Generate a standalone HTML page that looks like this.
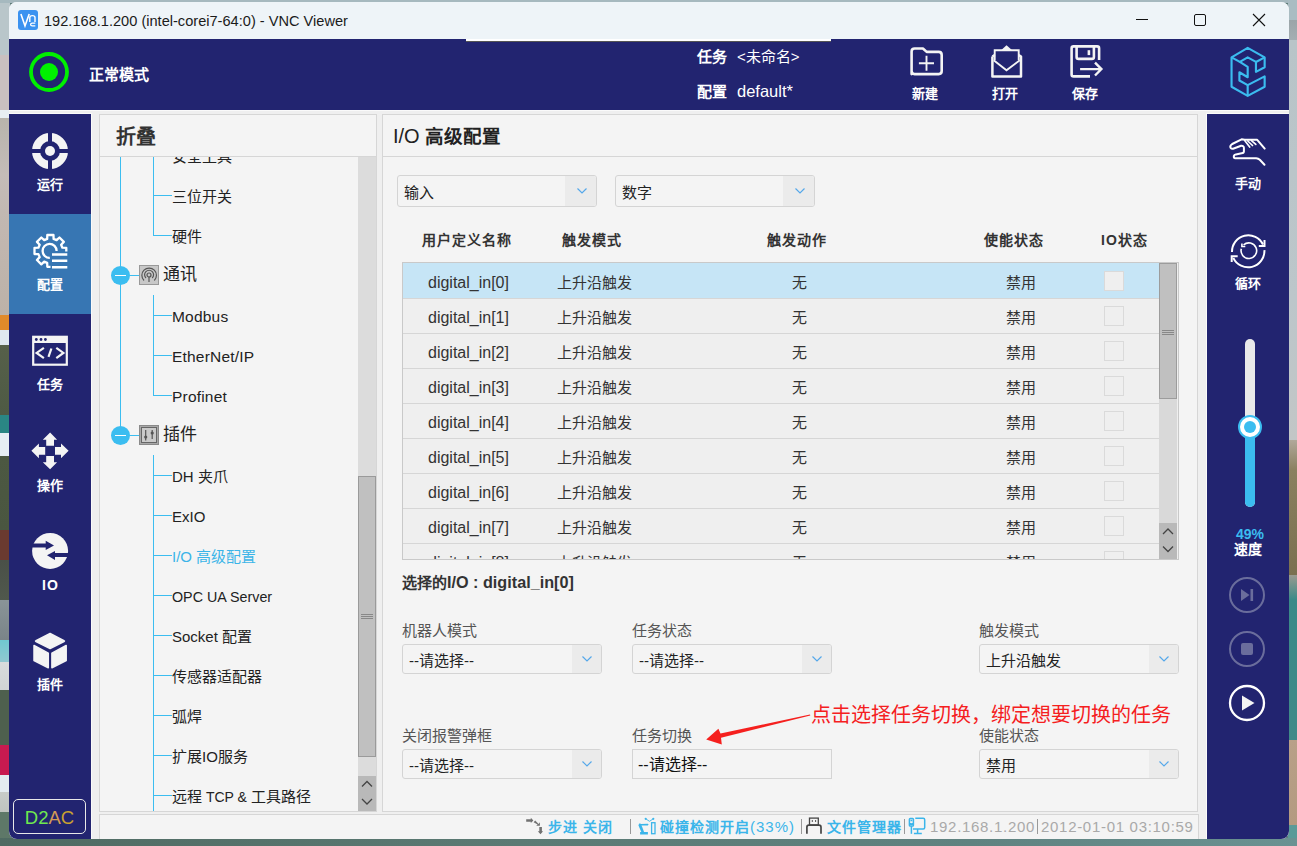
<!DOCTYPE html>
<html lang="zh-CN">
<head>
<meta charset="utf-8">
<style>
*{box-sizing:border-box}
html,body{margin:0;padding:0}
body{width:1297px;height:846px;overflow:hidden;position:relative;background:#5f7c7a;font-family:"Liberation Sans",sans-serif;color:#222}
.a{position:absolute}
.t{position:absolute;white-space:nowrap;line-height:20px;height:20px}
.b{font-weight:bold}
.navy{background:#222470}
</style>
</head>
<body>
<!-- desktop background strips -->
<div class="a" style="left:0;top:0;width:10px;height:846px;background:linear-gradient(#b9c6ca 0,#b9c6ca 55px,#c9c0c0 55px,#c9c0c0 110px,#e8eef2 110px,#e8eef2 118px,#b8b4ac 118px,#c4bcb8 175px,#c2b8b2 212px,#bcb2a8 315px,#e08a2a 315px,#e08a2a 330px,#dfe8f0 330px,#dfe8f0 345px,#56604a 345px,#4e5a44 415px,#2a8684 415px,#2a8684 433px,#e6eef4 433px,#e6eef4 456px,#4c5842 456px,#4a5640 530px,#6a3a30 530px,#6a3a30 560px,#4a5048 560px,#50584c 600px,#8a9498 600px,#7a8488 640px,#70c8d0 640px,#90c8d0 662px,#d8dcdc 662px,#d0d4d4 690px,#4e604e 690px,#4e604e 745px,#c81a50 745px,#c81a50 775px,#e4ecf0 775px,#e4ecf0 792px,#c8ccc8 792px,#c0c4c0 812px,#5e7868 812px,#5e7868 846px)"></div>
<div class="a" style="left:0;top:0;width:1297px;height:3px;background:#a6b9bf"></div>
<div class="a" style="left:1288px;top:0;width:9px;height:846px;background:linear-gradient(#a9bcc2 0,#a9bcc2 20px,#9aa4a8 20px,#a4aeb2 40px,#b8c4c8 40px,#bcc6ca 300px,#c2c6c6 440px,#b0a89a 440px,#8a8060 470px,#7a7050 575px,#9a9a90 575px,#3a8a88 600px,#408a88 740px,#b8a088 740px,#b49a80 825px,#5a9a98 825px)"></div>
<div class="a" style="left:0;top:838px;width:1297px;height:8px;background:linear-gradient(90deg,#4f6a62,#5b7a74 40%,#5f8280 75%,#6a9292)"></div>
<!-- window -->
<div class="a" style="left:9px;top:2px;width:1280px;height:837px;border-radius:8px;overflow:hidden;background:#efefef"></div>
<!-- title bar -->
<div class="a" style="left:9px;top:2px;width:1280px;height:37px;border-radius:8px 8px 0 0;background:#eef4f8"></div>


<!-- title bar content -->
<div class="a" style="left:18px;top:10px;width:20px;height:20px;border-radius:3px;background:#3a92f0"></div>
<svg class="a" style="left:18px;top:10px" width="20" height="20" viewBox="0 0 20 20"><path d="M2.9 3.9 L7 15.9 L11.2 3.9" fill="none" stroke="#fff" stroke-width="1.6"/><path d="M11.8 11.9 V7.6 Q11.8 5.6 14.4 5.6 Q17 5.6 17 7.6 V11.9" fill="none" stroke="#fff" stroke-width="1.4"/><path d="M17.3 13.2 H14.2 Q12.6 13.2 12.6 14.5 Q12.6 15.8 14.2 15.8 H17.3" fill="none" stroke="#fff" stroke-width="1.3"/></svg>
<div class="t" style="left:44px;top:10.5px;font-size:14.6px;color:#1b1b1b">192.168.1.200 (intel-corei7-64:0) - VNC Viewer</div>
<div class="a" style="left:1136px;top:19px;width:12px;height:1px;background:#111"></div>
<div class="a" style="left:1194px;top:14px;width:12px;height:12px;border:1.2px solid #111;border-radius:2px"></div>
<svg class="a" style="left:1252px;top:13px" width="14" height="14" viewBox="0 0 14 14"><path d="M1 1 L13 13 M13 1 L1 13" stroke="#111" stroke-width="1.1"/></svg>

<!-- header -->
<div class="a navy" style="left:9px;top:39px;width:1280px;height:71px"></div>
<div class="a" style="left:466px;top:39px;width:365px;height:3px;background:#fff;border-bottom:1px solid #555"></div>
<svg class="a" style="left:29px;top:52px" width="40" height="40" viewBox="0 0 40 40"><circle cx="20" cy="20" r="18" fill="none" stroke="#00f000" stroke-width="3.8"/><circle cx="20" cy="20" r="9" fill="#00f000"/></svg>
<div class="t b" style="left:89px;top:65px;font-size:15px;color:#fff">正常模式</div>
<div class="t b" style="left:697px;top:47px;font-size:15px;color:#fff">任务</div>
<div class="t" style="left:737px;top:47px;font-size:15px;color:#fff">&lt;未命名&gt;</div>
<div class="t b" style="left:697px;top:82px;font-size:15px;color:#fff">配置</div>
<div class="t" style="left:737px;top:81px;font-size:16.5px;color:#fff">default*</div>
<!-- header buttons -->
<svg class="a" style="left:904px;top:40px" width="45" height="40" viewBox="0 0 45 40"><path d="M7.6 34.1 V11.5 Q7.6 8.5 10.6 8.5 H18.9 L22.7 11.9 H34.7 Q37.7 11.9 37.7 14.9 V31.1 Q37.7 34.1 34.7 34.1 H10.6 Q7.6 34.1 7.6 31.1 Z" fill="none" stroke="#f4f4f4" stroke-width="2.6" stroke-linejoin="round"/><path d="M22.5 15.8 V30.7 M14.9 23.2 H30" stroke="#f4f4f4" stroke-width="1.9"/></svg>
<div class="t b" style="left:912px;top:84px;font-size:13px;color:#fff">新建</div>
<svg class="a" style="left:985px;top:40px" width="45" height="40" viewBox="0 0 45 40"><path d="M7.4 16.5 V36.5 H36 V16.5 L33.7 15 M7.4 16.5 L9.7 15" fill="none" stroke="#f4f4f4" stroke-width="2.5" stroke-linejoin="round"/><path d="M9.7 20 V10.2 H33.7 V20" fill="none" stroke="#f4f4f4" stroke-width="1.9"/><path d="M16.1 10.2 L21.5 5.2 L27.2 10.2 Z" fill="#f4f4f4"/><path d="M8.7 20.3 L21.5 30.3 L34.8 20.3" fill="none" stroke="#f4f4f4" stroke-width="1.9"/></svg>
<div class="t b" style="left:992px;top:84px;font-size:13px;color:#fff">打开</div>
<svg class="a" style="left:1064px;top:40px" width="45" height="40" viewBox="0 0 45 40"><path d="M26 36.4 H9.6 Q7.6 36.4 7.6 34.4 V8.4 Q7.6 6.4 9.6 6.4 H33.1 Q35.1 6.4 35.1 8.4 V19.9" fill="none" stroke="#f4f4f4" stroke-width="2.6"/><path d="M12.6 6.4 V16.9 Q12.6 18.9 14.6 18.9 H27.9 Q29.9 18.9 29.9 16.9 V6.4" fill="none" stroke="#f4f4f4" stroke-width="2.6"/><rect x="23.6" y="10.2" width="2.6" height="4.9" fill="#f4f4f4"/><path d="M16.1 29.1 H37.4 M31 22.7 L37.4 29.1 L31 35.5" fill="none" stroke="#f4f4f4" stroke-width="2.4"/></svg>
<div class="t b" style="left:1072px;top:84px;font-size:13px;color:#fff">保存</div>
<!-- logo -->
<svg class="a" style="left:1215px;top:40px" width="70" height="70" viewBox="0 0 846 846"><g fill="none" stroke="#3bbcef" stroke-width="26" stroke-linejoin="round"><path d="M395 95 L600 210 L600 330 L495 385 L495 265 L395 210 L300 265 L395 325 L395 450 L295 390 L295 490 L395 545 L600 440 L600 565 L395 675 L200 565 L200 210 Z"/><path d="M200 210 L300 265"/><path d="M495 265 L600 210"/><path d="M395 545 L395 675"/></g></svg>


<!-- left nav -->
<div class="a" style="left:9px;top:110px;width:1280px;height:1px;background:#fafafa"></div>
<div class="a" style="left:9px;top:113px;width:83px;height:726px;background:#fafafa;border-radius:0 0 0 8px"></div>
<div class="a" style="left:1206px;top:113px;width:83px;height:726px;background:#fafafa;border-radius:0 0 8px 0"></div>
<div class="a navy" style="left:9px;top:114px;width:82px;height:725px;border-radius:0 0 0 8px"></div>
<div class="a" style="left:9px;top:214px;width:82px;height:100px;background:#3776b3"></div>
<svg class="a" style="left:32px;top:133px" width="36" height="36" viewBox="0 0 36 36"><circle cx="18" cy="18" r="14" fill="none" stroke="#f4f4f4" stroke-width="8"/><rect x="16" y="0" width="4" height="36" fill="#222470"/><rect x="0" y="16" width="36" height="4" fill="#222470"/><circle cx="18" cy="18" r="5" fill="#f4f4f4"/></svg>
<div class="t b" style="left:9px;width:82px;text-align:center;top:175px;font-size:13px;color:#fff">运行</div>
<svg class="a" style="left:28px;top:228px" width="44" height="44" viewBox="0 0 44 44"><defs><clipPath id="gc"><path d="M0 0 H44 V23.5 H22.5 V44 H0 Z"/></clipPath></defs><g clip-path="url(#gc)"><path d="M19.19 10.92 L19.31 7.00 L25.49 7.00 L25.61 10.92 L28.60 12.16 L31.46 9.47 L35.83 13.84 L33.14 16.70 L34.38 19.69 L38.30 19.81 L38.30 25.99 L34.38 26.11 L33.14 29.10 L35.83 31.96 L31.46 36.33 L28.60 33.64 L25.61 34.88 L25.49 38.80 L19.31 38.80 L19.19 34.88 L16.20 33.64 L13.34 36.33 L8.97 31.96 L11.66 29.10 L10.42 26.11 L6.50 25.99 L6.50 19.81 L10.42 19.69 L11.66 16.70 L8.97 13.84 L13.34 9.47 L16.20 12.16 Z" fill="none" stroke="#fff" stroke-width="2.3" stroke-linejoin="round"/></g><path d="M28.6 22.9 A7 7 0 1 0 21.8 29.9" fill="none" stroke="#fff" stroke-width="2.3"/><path d="M24 26.5 H39.3 M24 32.8 H39.3 M24 39.3 H39.3" stroke="#fff" stroke-width="2.5"/></svg>
<div class="t b" style="left:9px;width:82px;text-align:center;top:275px;font-size:13px;color:#fff">配置</div>
<svg class="a" style="left:28px;top:328px" width="44" height="44" viewBox="0 0 44 44"><rect x="5.2" y="8.8" width="33.6" height="27.9" fill="none" stroke="#f4f4f4" stroke-width="2.2"/><rect x="5" y="8" width="34" height="7" fill="#f4f4f4"/><circle cx="8.3" cy="11.5" r="1.4" fill="#222470"/><circle cx="13" cy="11.5" r="1.4" fill="#222470"/><circle cx="17.4" cy="11.5" r="1.4" fill="#222470"/><path d="M15.9 19.8 L8.6 24.9 L15.9 30.2 M28.3 19.8 L35.4 24.9 L28.3 30.2 M23.4 20.5 L20.5 28.9" fill="none" stroke="#f4f4f4" stroke-width="2.2"/></svg>
<div class="t b" style="left:9px;width:82px;text-align:center;top:375px;font-size:13px;color:#fff">任务</div>
<svg class="a" style="left:28px;top:428px" width="44" height="44" viewBox="0 0 44 44"><path d="M22.1 4.4 L29.1 11.7 H26 V17.7 H18.2 V11.7 H14.8 Z M22.1 41.3 L29.1 34.3 H26 V28.1 H18.2 V34.3 H14.8 Z M3.4 22.8 L10.9 15.6 V19 H17.2 V26.8 H10.9 V30.2 Z M40.6 22.8 L33 15.6 V19 H27 V26.8 H33 V30.2 Z" fill="#f4f4f4"/></svg>
<div class="t b" style="left:9px;width:82px;text-align:center;top:476px;font-size:13px;color:#fff">操作</div>
<svg class="a" style="left:28px;top:528px" width="44" height="44" viewBox="0 0 44 44"><circle cx="22.1" cy="22.9" r="18" fill="#f4f4f4"/><path d="M0 15.6 H17.7 V12.7 L26 17.4 L17.7 22.1 V19.5 H0 Z M44 25 H27 V22.9 L19 27.3 L27 32 V29.1 H44 Z" fill="#222470"/></svg>
<div class="t b" style="left:9px;width:82px;text-align:center;top:575px;font-size:14px;letter-spacing:1px;text-indent:1px;color:#fff">IO</div>
<svg class="a" style="left:28px;top:628px" width="44" height="44" viewBox="0 0 44 44"><path d="M22.1 5.5 L36 12.7 Q37 13 36 13.5 L22.1 20.6 L8 13.5 Q7 13 8 12.7 Z" fill="#f4f4f4" stroke="#f4f4f4" stroke-width="1.5" stroke-linejoin="round"/><path d="M6 17.5 L20.3 25.2 V39.8 L6 32.5 Z M38.2 17.5 L23.9 25.2 V39.8 L38.2 32.5 Z" fill="#f4f4f4" stroke="#f4f4f4" stroke-width="1.5" stroke-linejoin="round"/></svg>
<div class="t b" style="left:9px;width:82px;text-align:center;top:675px;font-size:13px;color:#fff">插件</div>
<div class="a" style="left:13px;top:799px;width:73px;height:35px;border:1.3px solid #e8e8e8;border-radius:5px"></div>
<div class="t" style="left:13px;width:73px;text-align:center;top:807px;font-size:18.5px;line-height:22px;height:22px"><span style="color:#6fe84f">D2</span><span style="color:#d39a55">A</span><span style="color:#c9a030">C</span></div>

<!-- right nav -->
<div class="a navy" style="left:1207px;top:114px;width:82px;height:725px;border-radius:0 0 8px 0"></div>
<svg class="a" style="left:1226px;top:132px" width="44" height="44" viewBox="0 0 44 44"><path d="M38.7 16.6 L31.2 7.8 H18.7 L15.6 7.3 L6.2 12 Q3.5 13.8 4.6 15.8 Q5.8 17.3 7.8 16.5 L15.1 13.8 Q17.9 13.6 17.9 16 V19.5 Q17.9 21 15.6 21.3 L9.9 22.4 Q7.6 23 7.8 25 Q8 26.3 9 26.3 H30.2 Q32.3 26.5 33.8 27.8 L38.5 32.8" fill="none" stroke="#fff" stroke-width="2" stroke-linecap="round" stroke-linejoin="round"/><path d="M18.7 8.6 L23.7 15 M21.8 9 L26.5 13.5 M25.5 8.6 L29.8 12.4" stroke="#fff" stroke-width="1.7" stroke-linecap="round"/></svg>
<div class="t b" style="left:1207px;width:82px;text-align:center;top:174px;font-size:13px;color:#fff">手动</div>
<svg class="a" style="left:1226px;top:228px" width="44" height="44" viewBox="0 0 44 44"><path d="M6 23.9 A16.3 16.3 0 0 1 37 16.5" fill="none" stroke="#fff" stroke-width="2"/><path d="M38.5 12 V17.9 H32.8" fill="none" stroke="#fff" stroke-width="2"/><path d="M38.4 22.1 A16.3 16.3 0 0 1 7.3 29.8" fill="none" stroke="#fff" stroke-width="2"/><path d="M5.7 34.1 V28.3 H11.7" fill="none" stroke="#fff" stroke-width="2"/><path d="M15.3 20.7 A7.8 7.8 0 1 0 17.6 16.9" fill="none" stroke="#fff" stroke-width="1.6"/><path d="M15.9 15.6 V18.5 H19.3" fill="none" stroke="#fff" stroke-width="1.6"/></svg>
<div class="t b" style="left:1207px;width:82px;text-align:center;top:274px;font-size:13px;color:#fff">循环</div>
<!-- slider -->
<div class="a" style="left:1245px;top:339px;width:10px;height:168px;border-radius:5px;background:#e9e9e9;overflow:hidden"><div class="a" style="left:0;top:88px;width:10px;height:80px;background:#3bbdf0"></div></div>
<div class="a" style="left:1238px;top:415px;width:24px;height:24px;border-radius:50%;background:#fff;border:2px solid #3bbdf0"></div>
<div class="a" style="left:1244px;top:421px;width:12px;height:12px;border-radius:50%;background:#3bbdf0"></div>
<div class="t b" style="left:1207px;width:86px;text-align:center;top:524px;font-size:14px;color:#3bbdf0">49%</div>
<div class="t b" style="left:1207px;width:82px;text-align:center;top:539px;font-size:14px;color:#fff">速度</div>
<svg class="a" style="left:1228px;top:576px" width="38" height="38" viewBox="0 0 38 38"><circle cx="19" cy="19" r="17" fill="none" stroke="#6a6d9c" stroke-width="2"/><path d="M13 13 L21.5 19 L13 25 Z" fill="#6a6d9c"/><rect x="22.5" y="13" width="2.6" height="12" fill="#6a6d9c"/></svg>
<svg class="a" style="left:1228px;top:630px" width="38" height="38" viewBox="0 0 38 38"><circle cx="19" cy="19" r="17" fill="none" stroke="#6a6d9c" stroke-width="2"/><rect x="13" y="13" width="12" height="12" rx="2" fill="#6a6d9c"/></svg>
<svg class="a" style="left:1228px;top:684px" width="38" height="38" viewBox="0 0 38 38"><circle cx="19" cy="19" r="17" fill="none" stroke="#fff" stroke-width="2.3"/><path d="M14 11.5 L26.5 19 L14 26.5 Z" fill="#f4f4f4"/></svg>



<!-- tree panel -->
<div class="a" style="left:99px;top:114px;width:278px;height:698px;border:1px solid #d6d6d6;background:#f4f4f4"></div>
<div class="a" style="left:100px;top:156px;width:276px;height:1px;background:#d6d6d6"></div>
<div class="t b" style="left:116px;top:127px;font-size:20px;line-height:20px;color:#333">折叠</div>
<div class="a" style="left:100px;top:157px;width:276px;height:654px;overflow:hidden">
<div class="a" style="left:20px;top:0;width:1px;height:278px;background:#3bbdf0"></div>
<div class="a" style="left:53px;top:-17px;width:1px;height:96px;background:#3bbdf0"></div>
<div class="a" style="left:53px;top:138px;width:1px;height:101px;background:#3bbdf0"></div>
<div class="a" style="left:53px;top:298px;width:1px;height:376px;background:#3bbdf0"></div>
<div class="a" style="left:53px;top:-2px;width:19px;height:1px;background:#3bbdf0"></div>
<div class="t" style="left:72px;top:-10px;font-size:15px;color:#222">安全工具</div>
<div class="a" style="left:53px;top:38px;width:19px;height:1px;background:#3bbdf0"></div>
<div class="t" style="left:72px;top:30px;font-size:15px;color:#222">三位开关</div>
<div class="a" style="left:53px;top:78px;width:19px;height:1px;background:#3bbdf0"></div>
<div class="t" style="left:72px;top:70px;font-size:15px;color:#222">硬件</div>
<div class="a" style="left:11px;top:109px;width:19px;height:19px;border-radius:50%;background:#3bbdf0"></div>
<div class="a" style="left:15px;top:118px;width:11px;height:1px;background:#fff"></div>
<div class="a" style="left:30px;top:118px;width:9px;height:1px;background:#3bbdf0"></div>
<div class="t" style="left:63px;top:108px;font-size:17px;color:#222">通讯</div>
<div class="a" style="left:53px;top:158px;width:19px;height:1px;background:#3bbdf0"></div>
<div class="t" style="left:72px;top:150px;font-size:15px;color:#222"><span style="font-size:15.5px;letter-spacing:0.2px">Modbus</span></div>
<div class="a" style="left:53px;top:198px;width:19px;height:1px;background:#3bbdf0"></div>
<div class="t" style="left:72px;top:190px;font-size:15px;color:#222"><span style="font-size:15.5px;letter-spacing:0.2px">EtherNet/IP</span></div>
<div class="a" style="left:53px;top:238px;width:19px;height:1px;background:#3bbdf0"></div>
<div class="t" style="left:72px;top:230px;font-size:15px;color:#222"><span style="font-size:15.5px;letter-spacing:0.2px">Profinet</span></div>
<div class="a" style="left:11px;top:269px;width:19px;height:19px;border-radius:50%;background:#3bbdf0"></div>
<div class="a" style="left:15px;top:278px;width:11px;height:1px;background:#fff"></div>
<div class="a" style="left:30px;top:278px;width:9px;height:1px;background:#3bbdf0"></div>
<div class="t" style="left:63px;top:268px;font-size:17px;color:#222">插件</div>
<div class="a" style="left:53px;top:318px;width:19px;height:1px;background:#3bbdf0"></div>
<div class="t" style="left:72px;top:310px;font-size:15px;color:#222">DH 夹爪</div>
<div class="a" style="left:53px;top:358px;width:19px;height:1px;background:#3bbdf0"></div>
<div class="t" style="left:72px;top:350px;font-size:15px;color:#222">ExIO</div>
<div class="a" style="left:53px;top:398px;width:19px;height:1px;background:#3bbdf0"></div>
<div class="t" style="left:72px;top:390px;font-size:15px;color:#3bb4e8">I/O 高级配置</div>
<div class="a" style="left:53px;top:438px;width:19px;height:1px;background:#3bbdf0"></div>
<div class="t" style="left:72px;top:430px;font-size:15px;color:#222"><span style="font-size:14.3px">OPC UA Server</span></div>
<div class="a" style="left:53px;top:478px;width:19px;height:1px;background:#3bbdf0"></div>
<div class="t" style="left:72px;top:470px;font-size:15px;color:#222">Socket 配置</div>
<div class="a" style="left:53px;top:518px;width:19px;height:1px;background:#3bbdf0"></div>
<div class="t" style="left:72px;top:510px;font-size:15px;color:#222">传感器适配器</div>
<div class="a" style="left:53px;top:558px;width:19px;height:1px;background:#3bbdf0"></div>
<div class="t" style="left:72px;top:550px;font-size:15px;color:#222">弧焊</div>
<div class="a" style="left:53px;top:598px;width:19px;height:1px;background:#3bbdf0"></div>
<div class="t" style="left:72px;top:590px;font-size:15px;color:#222">扩展IO服务</div>
<div class="a" style="left:53px;top:638px;width:19px;height:1px;background:#3bbdf0"></div>
<div class="t" style="left:72px;top:630px;font-size:15px;color:#222">远程<span style="font-size:14px"> TCP &amp; </span>工具路径</div>
<svg class="a" style="left:39px;top:108px" width="20" height="20" viewBox="0 0 20 20"><rect x="0.5" y="0.5" width="19" height="19" fill="#c8c8c8" stroke="#999"/><g fill="none" stroke="#555" stroke-width="1.2"><path d="M5 15.5 A7.3 7.3 0 1 1 15.3 15.5"/><path d="M7 13 A4.5 4.5 0 1 1 13.2 13"/><circle cx="10" cy="10" r="2"/><path d="M10 12 V17"/></g></svg>
<svg class="a" style="left:39px;top:268px" width="20" height="20" viewBox="0 0 20 20"><rect x="0.5" y="0.5" width="19" height="19" fill="#a8a8a8" stroke="#8a8a8a"/><rect x="2.5" y="2.5" width="15" height="15" fill="#cacaca" stroke="#666"/><g stroke="#555" stroke-width="1.2"><path d="M6.7 5 V15.5 M13.2 5 V14"/></g><circle cx="6.7" cy="12" r="1.6" fill="#555"/><circle cx="13.2" cy="8" r="1.6" fill="#555"/></svg>
<div class="a" style="left:258px;top:0;width:18px;height:654px;background:#dcdcdc"></div>
<div class="a" style="left:258px;top:319px;width:18px;height:281px;background:#c0c0c0;border:1px solid #9a9a9a"></div>
<div class="a" style="left:261px;top:457px;width:12px;height:5px;border-top:1px solid #888;border-bottom:1px solid #888"></div><div class="a" style="left:261px;top:459px;width:12px;height:1px;background:#888"></div>
<div class="a" style="left:258px;top:619px;width:18px;height:35px;background:#b9b9b9"></div>
<svg class="a" style="left:258px;top:619px" width="18" height="35" viewBox="0 0 18 35"><path d="M4 10.5 L9 5.5 L14 10.5 M4 23 L9 28 L14 23" fill="none" stroke="#444" stroke-width="1.3"/></svg>
</div>
<!-- main panel -->
<div class="a" style="left:382px;top:114px;width:816px;height:698px;border:1px solid #d6d6d6;background:#f4f4f4"></div>
<div class="a" style="left:383px;top:156px;width:814px;height:1px;background:#d6d6d6"></div>
<div class="t b" style="left:393px;top:126px;font-size:18.5px;line-height:20px;color:#222"><span style="font-weight:normal;font-size:20px">I/O</span> 高级配置</div>
<div class="a" style="left:397px;top:175px;width:200px;height:32px;border:1px solid #d4d4d4;border-radius:3px;background:#f4f4f4;overflow:hidden"><div class="a" style="right:0;top:0;width:31px;height:100%;background:#ebebeb"></div></div><svg class="a" style="left:576px;top:187px" width="12" height="8" viewBox="0 0 12 8"><path d="M1.5 1.5 L6 6 L10.5 1.5" fill="none" stroke="#55a8ea" stroke-width="1.2"/></svg><div class="t" style="left:404px;top:183px;font-size:15px;color:#222">输入</div>
<div class="a" style="left:615px;top:175px;width:200px;height:32px;border:1px solid #d4d4d4;border-radius:3px;background:#f4f4f4;overflow:hidden"><div class="a" style="right:0;top:0;width:31px;height:100%;background:#ebebeb"></div></div><svg class="a" style="left:794px;top:187px" width="12" height="8" viewBox="0 0 12 8"><path d="M1.5 1.5 L6 6 L10.5 1.5" fill="none" stroke="#55a8ea" stroke-width="1.2"/></svg><div class="t" style="left:622px;top:183px;font-size:15px;color:#222">数字</div>
<div class="t b" style="left:422px;top:230px;font-size:14px;letter-spacing:1px;color:#333">用户定义名称</div>
<div class="t b" style="left:562px;top:230px;font-size:14px;letter-spacing:1px;color:#333">触发模式</div>
<div class="t b" style="left:767px;top:230px;font-size:14px;letter-spacing:1px;color:#333">触发动作</div>
<div class="t b" style="left:984px;top:230px;font-size:14px;letter-spacing:1px;color:#333">使能状态</div>
<div class="t b" style="left:1101px;top:230px;font-size:14px;letter-spacing:1px;color:#333">IO状态</div>
<div class="a" style="left:402px;top:262px;width:777px;height:298px;border:1px solid #c9c9c9;background:#efefef;overflow:hidden">
<div class="a" style="left:0;top:0px;width:756px;height:36px;background:#c6e5f6;border-bottom:1px solid #d6d6d6"></div>
<div class="t" style="left:25px;top:10px;font-size:16px;color:#333">digital_in[0]</div>
<div class="t" style="left:154px;top:10px;font-size:15px;color:#333">上升沿触发</div>
<div class="t" style="left:389px;top:10px;font-size:15px;color:#333">无</div>
<div class="t" style="left:603px;top:10px;font-size:15px;color:#333">禁用</div>
<div class="a" style="left:701px;top:8px;width:20px;height:20px;border:1px solid #dadada;background:#efefef"></div>
<div class="a" style="left:0;top:36px;width:756px;height:35px;background:#efefef;border-bottom:1px solid #d6d6d6"></div>
<div class="t" style="left:25px;top:45px;font-size:16px;color:#333">digital_in[1]</div>
<div class="t" style="left:154px;top:45px;font-size:15px;color:#333">上升沿触发</div>
<div class="t" style="left:389px;top:45px;font-size:15px;color:#333">无</div>
<div class="t" style="left:603px;top:45px;font-size:15px;color:#333">禁用</div>
<div class="a" style="left:701px;top:43px;width:20px;height:20px;border:1px solid #dadada;background:#efefef"></div>
<div class="a" style="left:0;top:71px;width:756px;height:35px;background:#efefef;border-bottom:1px solid #d6d6d6"></div>
<div class="t" style="left:25px;top:80px;font-size:16px;color:#333">digital_in[2]</div>
<div class="t" style="left:154px;top:80px;font-size:15px;color:#333">上升沿触发</div>
<div class="t" style="left:389px;top:80px;font-size:15px;color:#333">无</div>
<div class="t" style="left:603px;top:80px;font-size:15px;color:#333">禁用</div>
<div class="a" style="left:701px;top:78px;width:20px;height:20px;border:1px solid #dadada;background:#efefef"></div>
<div class="a" style="left:0;top:106px;width:756px;height:35px;background:#efefef;border-bottom:1px solid #d6d6d6"></div>
<div class="t" style="left:25px;top:115px;font-size:16px;color:#333">digital_in[3]</div>
<div class="t" style="left:154px;top:115px;font-size:15px;color:#333">上升沿触发</div>
<div class="t" style="left:389px;top:115px;font-size:15px;color:#333">无</div>
<div class="t" style="left:603px;top:115px;font-size:15px;color:#333">禁用</div>
<div class="a" style="left:701px;top:113px;width:20px;height:20px;border:1px solid #dadada;background:#efefef"></div>
<div class="a" style="left:0;top:141px;width:756px;height:35px;background:#efefef;border-bottom:1px solid #d6d6d6"></div>
<div class="t" style="left:25px;top:150px;font-size:16px;color:#333">digital_in[4]</div>
<div class="t" style="left:154px;top:150px;font-size:15px;color:#333">上升沿触发</div>
<div class="t" style="left:389px;top:150px;font-size:15px;color:#333">无</div>
<div class="t" style="left:603px;top:150px;font-size:15px;color:#333">禁用</div>
<div class="a" style="left:701px;top:148px;width:20px;height:20px;border:1px solid #dadada;background:#efefef"></div>
<div class="a" style="left:0;top:176px;width:756px;height:35px;background:#efefef;border-bottom:1px solid #d6d6d6"></div>
<div class="t" style="left:25px;top:185px;font-size:16px;color:#333">digital_in[5]</div>
<div class="t" style="left:154px;top:185px;font-size:15px;color:#333">上升沿触发</div>
<div class="t" style="left:389px;top:185px;font-size:15px;color:#333">无</div>
<div class="t" style="left:603px;top:185px;font-size:15px;color:#333">禁用</div>
<div class="a" style="left:701px;top:183px;width:20px;height:20px;border:1px solid #dadada;background:#efefef"></div>
<div class="a" style="left:0;top:211px;width:756px;height:35px;background:#efefef;border-bottom:1px solid #d6d6d6"></div>
<div class="t" style="left:25px;top:220px;font-size:16px;color:#333">digital_in[6]</div>
<div class="t" style="left:154px;top:220px;font-size:15px;color:#333">上升沿触发</div>
<div class="t" style="left:389px;top:220px;font-size:15px;color:#333">无</div>
<div class="t" style="left:603px;top:220px;font-size:15px;color:#333">禁用</div>
<div class="a" style="left:701px;top:218px;width:20px;height:20px;border:1px solid #dadada;background:#efefef"></div>
<div class="a" style="left:0;top:246px;width:756px;height:35px;background:#efefef;border-bottom:1px solid #d6d6d6"></div>
<div class="t" style="left:25px;top:255px;font-size:16px;color:#333">digital_in[7]</div>
<div class="t" style="left:154px;top:255px;font-size:15px;color:#333">上升沿触发</div>
<div class="t" style="left:389px;top:255px;font-size:15px;color:#333">无</div>
<div class="t" style="left:603px;top:255px;font-size:15px;color:#333">禁用</div>
<div class="a" style="left:701px;top:253px;width:20px;height:20px;border:1px solid #dadada;background:#efefef"></div>
<div class="a" style="left:0;top:281px;width:756px;height:35px;background:#efefef;border-bottom:1px solid #d6d6d6"></div>
<div class="t" style="left:25px;top:290px;font-size:16px;color:#333">digital_in[8]</div>
<div class="t" style="left:154px;top:290px;font-size:15px;color:#333">上升沿触发</div>
<div class="t" style="left:389px;top:290px;font-size:15px;color:#333">无</div>
<div class="t" style="left:603px;top:290px;font-size:15px;color:#333">禁用</div>
<div class="a" style="left:701px;top:288px;width:20px;height:20px;border:1px solid #dadada;background:#efefef"></div>
<div class="a" style="left:756px;top:0;width:18px;height:296px;background:#d9d9d9"></div>
<div class="a" style="left:756px;top:0;width:18px;height:136px;background:#c0c0c0;border:1px solid #9c9c9c"></div>
<div class="a" style="left:759px;top:67px;width:12px;height:5px;border-top:1px solid #888;border-bottom:1px solid #888"></div><div class="a" style="left:759px;top:69px;width:12px;height:1px;background:#888"></div>
<div class="a" style="left:756px;top:260px;width:18px;height:36px;background:#b9b9b9"></div>
<svg class="a" style="left:756px;top:260px" width="18" height="36" viewBox="0 0 18 36"><path d="M4 11 L9 6 L14 11 M4 23.5 L9 28.5 L14 23.5" fill="none" stroke="#444" stroke-width="1.3"/></svg>
</div>
<div class="t b" style="left:402px;top:572px;font-size:15px;color:#333">选择的<span style="font-size:16.2px">I/O : digital_in[0]</span></div>
<div class="t" style="left:402px;top:621px;font-size:15px;color:#555">机器人模式</div>
<div class="t" style="left:632px;top:621px;font-size:15px;color:#555">任务状态</div>
<div class="t" style="left:979px;top:621px;font-size:15px;color:#555">触发模式</div>
<div class="a" style="left:402px;top:644px;width:200px;height:30px;border:1px solid #d4d4d4;border-radius:3px;background:#f4f4f4;overflow:hidden"><div class="a" style="right:0;top:0;width:29px;height:100%;background:#ebebeb"></div></div><svg class="a" style="left:581px;top:655px" width="12" height="8" viewBox="0 0 12 8"><path d="M1.5 1.5 L6 6 L10.5 1.5" fill="none" stroke="#55a8ea" stroke-width="1.2"/></svg><div class="t" style="left:409px;top:651px;font-size:15px;color:#222">--请选择--</div>
<div class="a" style="left:632px;top:644px;width:200px;height:30px;border:1px solid #d4d4d4;border-radius:3px;background:#f4f4f4;overflow:hidden"><div class="a" style="right:0;top:0;width:29px;height:100%;background:#ebebeb"></div></div><svg class="a" style="left:811px;top:655px" width="12" height="8" viewBox="0 0 12 8"><path d="M1.5 1.5 L6 6 L10.5 1.5" fill="none" stroke="#55a8ea" stroke-width="1.2"/></svg><div class="t" style="left:639px;top:651px;font-size:15px;color:#222">--请选择--</div>
<div class="a" style="left:979px;top:644px;width:200px;height:30px;border:1px solid #d4d4d4;border-radius:3px;background:#f4f4f4;overflow:hidden"><div class="a" style="right:0;top:0;width:29px;height:100%;background:#ebebeb"></div></div><svg class="a" style="left:1158px;top:655px" width="12" height="8" viewBox="0 0 12 8"><path d="M1.5 1.5 L6 6 L10.5 1.5" fill="none" stroke="#55a8ea" stroke-width="1.2"/></svg><div class="t" style="left:986px;top:651px;font-size:15px;color:#222">上升沿触发</div>
<div class="t" style="left:402px;top:726px;font-size:15px;color:#555">关闭报警弹框</div>
<div class="t" style="left:632px;top:726px;font-size:15px;color:#555">任务切换</div>
<div class="t" style="left:979px;top:726px;font-size:15px;color:#555">使能状态</div>
<div class="a" style="left:402px;top:749px;width:200px;height:30px;border:1px solid #d4d4d4;border-radius:3px;background:#f4f4f4;overflow:hidden"><div class="a" style="right:0;top:0;width:29px;height:100%;background:#ebebeb"></div></div><svg class="a" style="left:581px;top:760px" width="12" height="8" viewBox="0 0 12 8"><path d="M1.5 1.5 L6 6 L10.5 1.5" fill="none" stroke="#55a8ea" stroke-width="1.2"/></svg><div class="t" style="left:409px;top:756px;font-size:15px;color:#222">--请选择--</div>
<div class="a" style="left:632px;top:749px;width:200px;height:30px;border:1px solid #d4d4d4;background:#f4f4f4"></div>
<div class="t" style="left:638px;top:755px;font-size:16px;color:#111">--请选择--</div>
<div class="a" style="left:979px;top:749px;width:200px;height:30px;border:1px solid #d4d4d4;border-radius:3px;background:#f4f4f4;overflow:hidden"><div class="a" style="right:0;top:0;width:29px;height:100%;background:#ebebeb"></div></div><svg class="a" style="left:1158px;top:760px" width="12" height="8" viewBox="0 0 12 8"><path d="M1.5 1.5 L6 6 L10.5 1.5" fill="none" stroke="#55a8ea" stroke-width="1.2"/></svg><div class="t" style="left:986px;top:756px;font-size:15px;color:#222">禁用</div>
<svg class="a" style="left:700px;top:705px" width="115" height="45" viewBox="700 705 115 45"><path d="M810 714.6 L720.5 733.5 L718.4 728.7 L706.2 739.5 L721.8 744.6 L721 737.8 L810.3 715.6 Z" fill="#f5201e"/></svg>
<div class="t" style="left:811px;top:704px;font-size:20px;line-height:22px;height:22px;color:#f5201e">点击选择任务切换，绑定想要切换的任务</div>
<!-- status bar -->
<div class="a" style="left:99px;top:814px;width:1100px;height:25px;border:1px solid #d6d6d6;border-bottom:none;background:#f4f4f4"></div>
<svg class="a" style="left:520px;top:814px" width="28" height="24" viewBox="0 0 28 24"><g fill="#717171"><path d="M6.2 5.3 H10.8 V3.8 L13.4 6.4 L10.8 9.1 V7.7 H6.2 Z"/><path d="M13.6 8.2 L15.2 6.5 L18.6 9.9 L19.9 8.3 L19.9 11.8 H16.2 L17.6 10.6 Z"/><path d="M19.3 13 H21.9 V17.3 H23.1 L20.5 20.2 L17.8 17.3 H19.3 Z"/></g></svg>
<div class="t b" style="left:548px;top:817px;font-size:14px;letter-spacing:1px;color:#3bb5ea">步进 关闭</div>
<div class="a" style="left:630px;top:819px;width:1px;height:15px;background:#999"></div>
<svg class="a" style="left:632px;top:814px" width="28" height="24" viewBox="0 0 28 24"><g fill="#3bb5ea"><rect x="8.1" y="18" width="7.8" height="2.5"/><path d="M9.4 18.2 L6.4 11.2 L9 10 L12.2 18.2 Z"/><path d="M7.3 9.6 Q8.5 9.2 9.2 10.1 L15.8 9.7 L16.6 10.5 L15.8 11.4 L9.2 11.6 Q8 12.5 6.9 11.5 Q6.3 10.3 7.3 9.6 Z"/><circle cx="13.7" cy="4.8" r="1.1"/><circle cx="21.3" cy="4.8" r="1.1"/></g><path d="M13.7 4.8 L17.5 7.3 L21.3 4.8" fill="none" stroke="#3bb5ea" stroke-width="0.9"/><rect x="19.6" y="8.7" width="3.4" height="11" fill="none" stroke="#3bb5ea" stroke-width="1.3"/></svg>
<div class="t b" style="left:660px;top:817px;font-size:14px;letter-spacing:1px;color:#3bb5ea">碰撞检测开启<span style="font-weight:normal;font-size:15px">(33%)</span></div>
<div class="a" style="left:801px;top:819px;width:1px;height:15px;background:#999"></div>
<svg class="a" style="left:800px;top:814px" width="24" height="24" viewBox="0 0 24 24"><rect x="9.5" y="4.1" width="8.8" height="6.9" fill="none" stroke="#454545" stroke-width="1.3"/><rect x="11.8" y="6" width="1" height="2" fill="#555"/><rect x="15.1" y="6" width="1" height="2" fill="#555"/><path d="M6.9 19.8 V13.2 Q6.9 11.2 8.9 11.2 H19 Q21 11.2 21 13.2 V19.8" fill="none" stroke="#454545" stroke-width="1.7"/></svg>
<div class="t b" style="left:827px;top:817px;font-size:14px;letter-spacing:1px;color:#3bb5ea">文件管理器</div>
<div class="a" style="left:904px;top:819px;width:1px;height:15px;background:#999"></div>
<svg class="a" style="left:902px;top:814px" width="24" height="24" viewBox="0 0 24 24"><g fill="none" stroke="#3bb5ea" stroke-width="1.5"><rect x="7.4" y="4.5" width="4" height="7.5" rx="0.8"/><path d="M9.4 12 V19.8"/><path d="M13.3 4.3 H21.2 Q22.7 4.3 22.7 5.8 V13.4 Q22.7 14.9 21.2 14.9 H11"/><path d="M15.6 14.9 V19.6 M11.9 19.6 H19.8"/><path d="M8.5 6.5 H10.3 M8.5 9 V10.3 H10.3 V9"/></g></svg>
<div class="t" style="left:930px;top:817px;font-size:15px;letter-spacing:0.7px;color:#a9a9a9">192.168.1.200</div>
<div class="a" style="left:1037px;top:819px;width:1px;height:15px;background:#999"></div>
<div class="t" style="left:1041px;top:817px;font-size:15px;letter-spacing:0.7px;color:#a9a9a9">2012-01-01 03:10:59</div>
</body>
</html>
